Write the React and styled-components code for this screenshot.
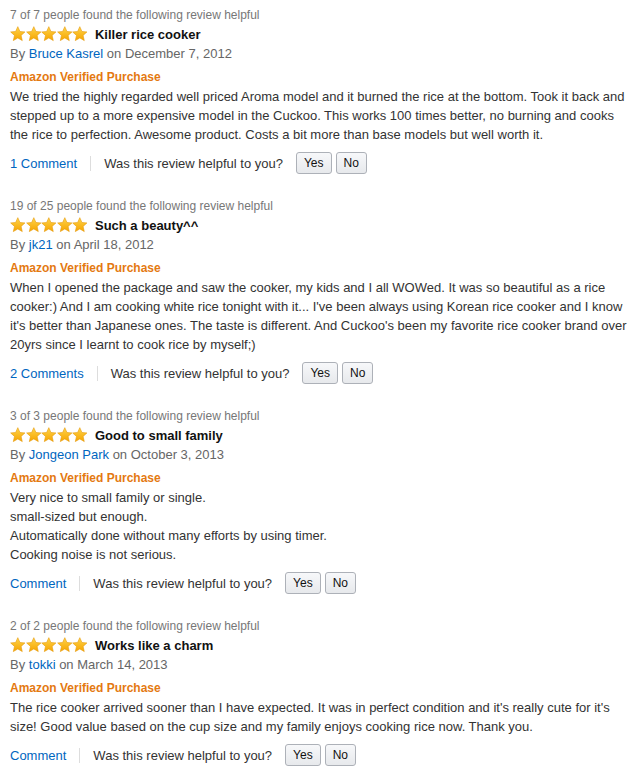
import React from "react";
import styled, { createGlobalStyle } from "styled-components";

const Global = createGlobalStyle`
  body { margin: 0; background: #fff; font-family: Arial, "Liberation Sans", sans-serif; }
`;

const Page = styled.div`
  width: 626px;
  padding: 4px 0 0 10px;
  display: flex;
  flex-direction: column;
  gap: 21px;
`;

const Review = styled.div`
  display: flex;
  flex-direction: column;
`;

const Helpful = styled.div`
  font-size: 12px;
  line-height: 20px;
  color: #777;
  padding-top: 1px;
  margin-bottom: -1px;
`;

const TitleRow = styled.div`
  display: flex;
  align-items: center;
  gap: 7px;
  height: 20px;
`;

const Title = styled.span`
  font-size: 13px;
  font-weight: bold;
  color: #111;
`;

const Byline = styled.div`
  font-size: 13px;
  line-height: 20px;
  color: #666;
  margin-bottom: 4px;
`;

const Link = styled.a`
  color: #0066c0;
  text-decoration: none;
  font-size: 13px;
`;

const Verified = styled.div`
  font-size: 12px;
  font-weight: bold;
  line-height: 19px;
  color: #e47911;
`;

const Body = styled.div`
  font-size: 13px;
  line-height: 19px;
  color: #333;
`;

const Line = styled.div`
  white-space: nowrap;
`;

const Actions = styled.div`
  display: flex;
  align-items: center;
  margin-top: 8px;
  height: 22px;
  font-size: 13px;
  color: #333;
`;

const Sep = styled.span`
  width: 1px;
  height: 15px;
  background: #ddd;
  margin: 0 13px;
`;

const Question = styled.span`
  margin-right: 13px;
`;

const Btn = styled.button`
  height: 22px;
  padding: 0 7px;
  margin-right: 4px;
  font-family: Arial, "Liberation Sans", sans-serif;
  font-size: 12px;
  color: #111;
  border: 1px solid #adb1b8;
  border-radius: 3px;
  background: linear-gradient(#f7f8fa, #e7e9ec);
  box-sizing: border-box;
`;

const StarsWrap = styled.span`
  display: inline-flex;
  gap: 0;
`;

const StarSvg = styled.svg`
  width: 15.6px;
  height: 16px;
  display: block;
`;

const Star = () => (
  <StarSvg viewBox="0 0 24 24" preserveAspectRatio="none">
    <defs>
      <linearGradient id="sg" x1="0" y1="0" x2="0" y2="1">
        <stop offset="0" stopColor="#ffd54a" />
        <stop offset="1" stopColor="#f5a400" />
      </linearGradient>
    </defs>
    <path
      d="M12 1l3.3 7.2 7.7.7-5.9 5.2 1.8 7.8L12 17.9l-6.9 4 1.8-7.8L1 8.9l7.7-.7z"
      fill="url(#sg)"
      stroke="#e59a0c"
      strokeWidth="0.9"
      strokeLinejoin="round"
    />
  </StarSvg>
);

const Stars = () => (
  <StarsWrap>
    {[0, 1, 2, 3, 4].map((i) => (
      <Star key={i} />
    ))}
  </StarsWrap>
);

const reviews = [
  {
    helpful: "7 of 7 people found the following review helpful",
    title: "Killer rice cooker",
    author: "Bruce Kasrel",
    date: "December 7, 2012",
    body: [
      "We tried the highly regarded well priced Aroma model and it burned the rice at the bottom. Took it back and",
      "stepped up to a more expensive model in the Cuckoo. This works 100 times better, no burning and cooks",
      "the rice to perfection. Awesome product. Costs a bit more than base models but well worth it.",
    ],
    comments: "1 Comment",
  },
  {
    helpful: "19 of 25 people found the following review helpful",
    title: "Such a beauty^^",
    author: "jk21",
    date: "April 18, 2012",
    body: [
      "When I opened the package and saw the cooker, my kids and I all WOWed. It was so beautiful as a rice",
      "cooker:) And I am cooking white rice tonight with it... I've been always using Korean rice cooker and I know",
      "it's better than Japanese ones. The taste is different. And Cuckoo's been my favorite rice cooker brand over",
      "20yrs since I learnt to cook rice by myself;)",
    ],
    comments: "2 Comments",
  },
  {
    helpful: "3 of 3 people found the following review helpful",
    title: "Good to small family",
    author: "Jongeon Park",
    date: "October 3, 2013",
    body: [
      "Very nice to small family or single.",
      "small-sized but enough.",
      "Automatically done without many efforts by using timer.",
      "Cooking noise is not serious.",
    ],
    comments: "Comment",
  },
  {
    helpful: "2 of 2 people found the following review helpful",
    title: "Works like a charm",
    author: "tokki",
    date: "March 14, 2013",
    body: [
      "The rice cooker arrived sooner than I have expected. It was in perfect condition and it's really cute for it's",
      "size! Good value based on the cup size and my family enjoys cooking rice now. Thank you.",
    ],
    comments: "Comment",
  },
];

export default function App() {
  return (
    <>
      <Global />
      <Page>
        {reviews.map((r, i) => (
          <Review key={i}>
            <Helpful>{r.helpful}</Helpful>
            <TitleRow>
              <Stars />
              <Title>{r.title}</Title>
            </TitleRow>
            <Byline>
              By <Link href="#">{r.author}</Link> on {r.date}
            </Byline>
            <Verified>Amazon Verified Purchase</Verified>
            <Body>
              {r.body.map((line, j) => (
                <Line key={j}>{line}</Line>
              ))}
            </Body>
            <Actions>
              <Link href="#">{r.comments}</Link>
              <Sep />
              <Question>Was this review helpful to you?</Question>
              <Btn>Yes</Btn>
              <Btn>No</Btn>
            </Actions>
          </Review>
        ))}
      </Page>
    </>
  );
}
